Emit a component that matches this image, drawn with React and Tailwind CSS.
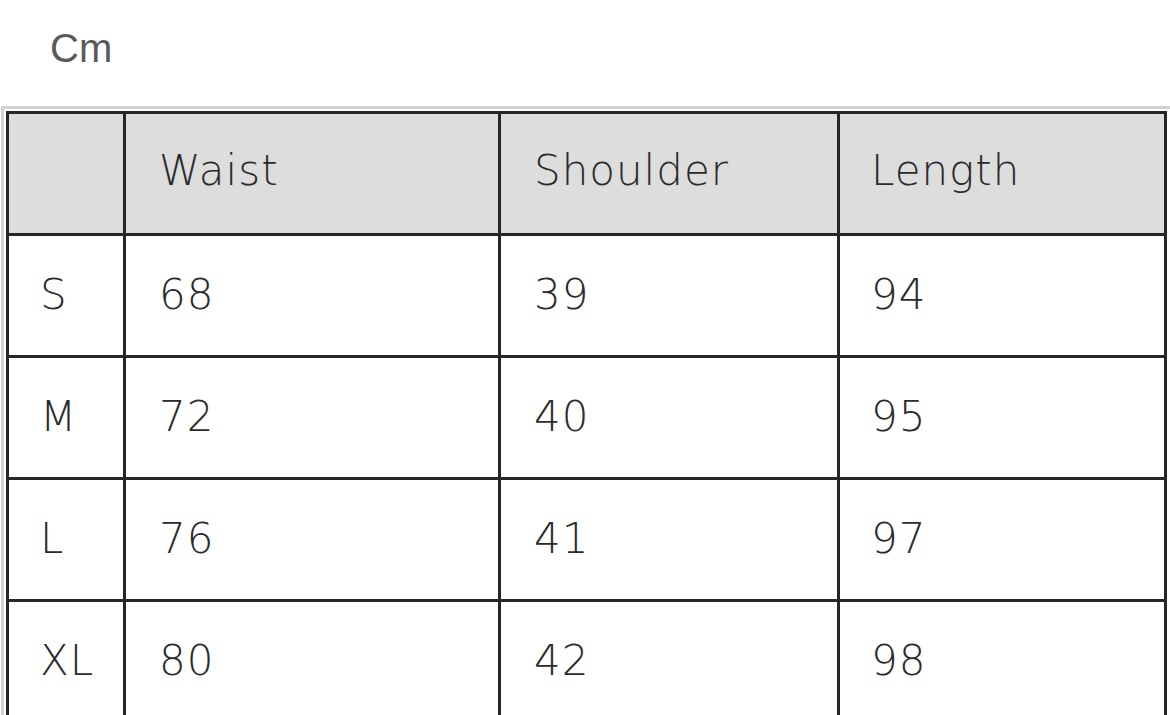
const headers = ["", "Waist", "Shoulder", "Length"];

const rows = [
  ["S", "68", "39", "94"],
  ["M", "72", "40", "95"],
  ["L", "76", "41", "97"],
  ["XL", "80", "42", "98"],
];

const cellFont = {
  fontFamily: "'DejaVu Sans ExtraLight', 'DejaVu Sans', sans-serif",
};

export default function App() {
  return (
    <div className="w-[1170px] h-[715px] overflow-hidden bg-white">
      {/* Unit label */}
      <div className="pt-[25px] pl-[50px] text-[40px] leading-[46px] text-[#5a5a5a] font-['Liberation_Sans',Arial,sans-serif]">
        Cm
      </div>

      {/* Size chart */}
      <div className="mt-[35px] ml-[1px] w-[1172px] border-[3px] border-[#d2d2d2] p-[2px]">
        <div className="grid grid-cols-[114px_372px_336px_324px] auto-rows-[119px] gap-[3px] p-[3px] bg-[#262626] w-[1161px]">
          {headers.map((h, i) => (
            <div
              key={`h-${i}`}
              className={`flex items-center pb-[6px] bg-[#dddddd] text-[42px] tracking-[1px] font-extralight text-[#2b2b2b] ${i === 0 ? "pl-[31px]" : i === 3 ? "pl-[31px]" : "pl-[33px]"}`}
              style={cellFont}
            >
              {h}
            </div>
          ))}
          {rows.map((row) =>
            row.map((cell, i) => (
              <div
                key={`${row[0]}-${i}`}
                className={`flex items-center pb-[3px] bg-white text-[42px] tracking-[1px] font-extralight text-[#2b2b2b] ${i === 0 ? "pl-[31px]" : i === 3 ? "pl-[31px]" : "pl-[33px]"}`}
                style={cellFont}
              >
                {cell}
              </div>
            ))
          )}
        </div>
      </div>
    </div>
  );
}
